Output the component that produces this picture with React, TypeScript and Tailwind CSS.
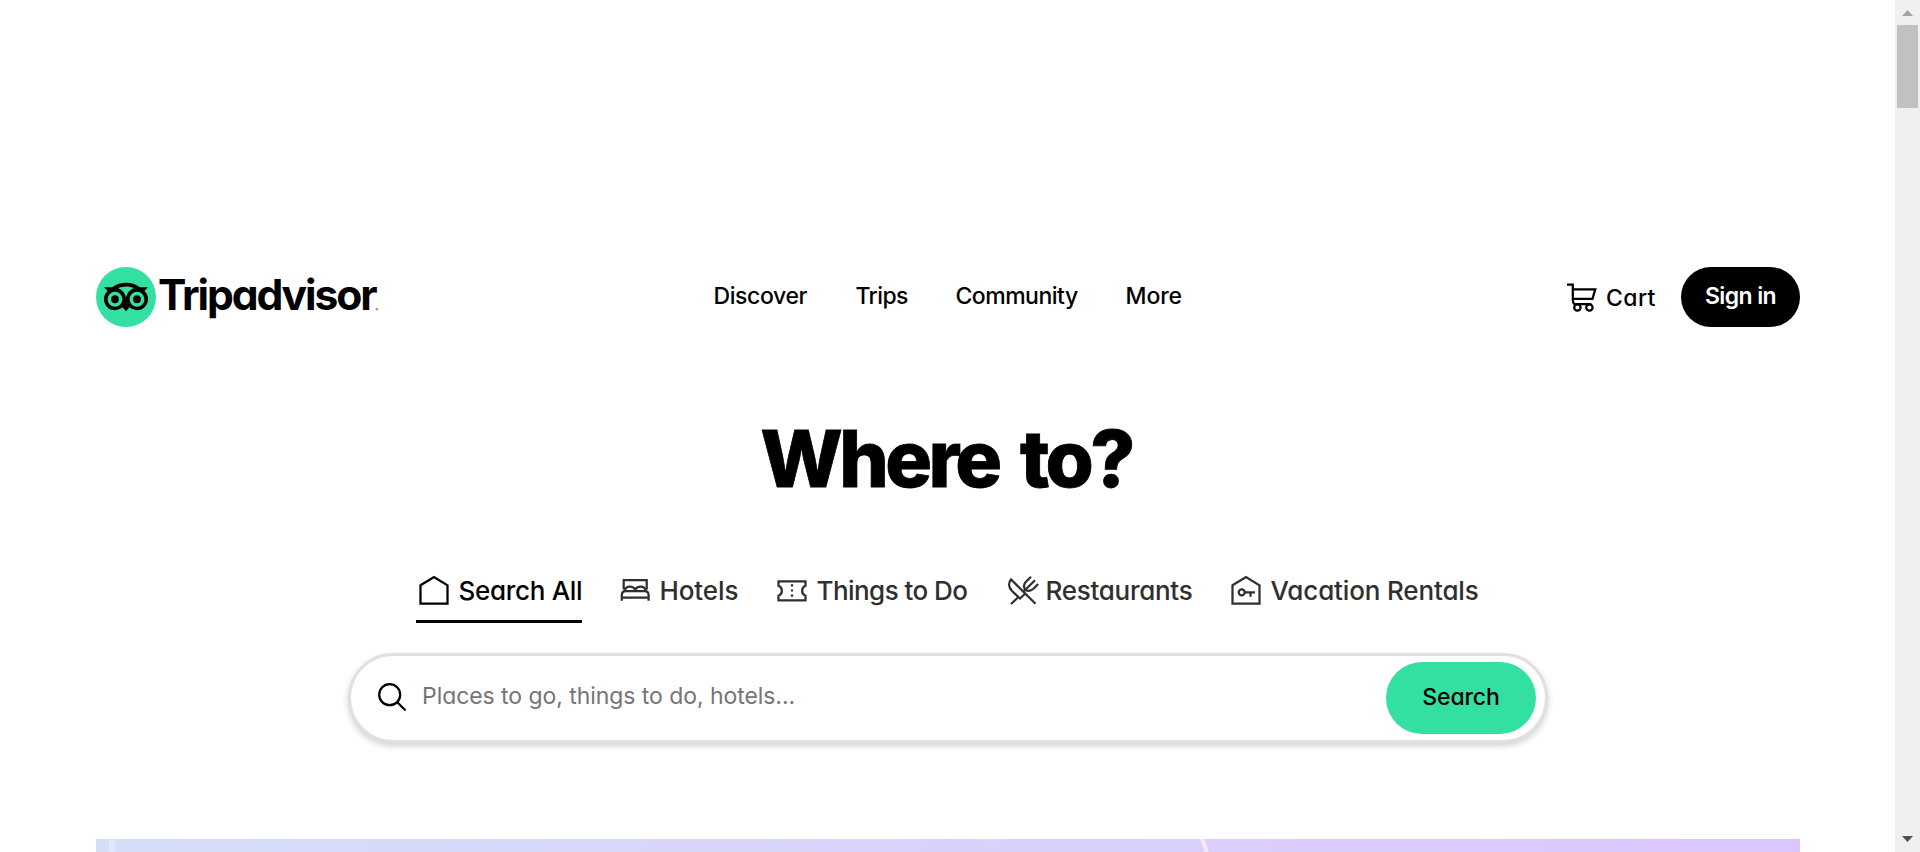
import type { ReactNode } from "react";
import { SiTripadvisor } from "react-icons/si";

function Icon({ children }: { children: ReactNode }) {
  return (
    <svg className="size-9 shrink-0" viewBox="0 0 36 36" fill="none" stroke="currentColor" strokeWidth="2.25">
      {children}
    </svg>
  );
}

const HomeIcon = () => (
  <Icon>
    <path d="M4.5 13.3 18 5l13.5 8.3v18.2h-27z" />
  </Icon>
);

const BedIcon = () => (
  <Icon>
    <path d="M5.700 17.500V8h23v9.500" />
    <path d="M3.800 28.700v-5.700q0-4 4-4h18.800q4 0 4 4v5.700M3.800 25.500h26.800" />
    <path d="M6.500 19q1.200-4.300 5.200-4.300t5.500 3q1.500-3 5.500-3t5.200 4.300" />
  </Icon>
);

const TicketIcon = () => (
  <Icon>
    <path d="M4.500 9.300h27v4.500c-4.500 1.700-4.500 8.200 0 9.900v4.600h-27v-4.600c4.500-1.700 4.500-8.200 0-9.900z" />
    <path d="M18 12.300v2.200M18 17.400v2.200M18 22.500v2.200" />
  </Icon>
);

const DiningIcon = () => (
  <Icon>
    <path d="M31.500 31.700 7 7.500C4 11 4.800 15.500 8 19l8 7.500 4.500-4.300M7 32l8-7.500M19.300 19.800 31 8.300" />
    <path d="m27 4.700-5.300 5.200q-3 3.500-.6 7.800 4.500 2.500 8.100-.7l5-5" />
  </Icon>
);

const KeyHomeIcon = () => (
  <Icon>
    <path d="M4.500 13.300 18 5l13.500 8.300v18.200h-27z" />
    <circle cx="13.700" cy="20.300" r="3" />
    <path d="M16.700 20.300H27M22.500 20.300v4.400" />
  </Icon>
);

const CartIcon = () => (
  <Icon>
    <path d="M3 5.500h5.800v15.200q0 2.700 1.500 4.300h17" />
    <path d="M8.800 10.300h22.500l-2.800 9.500H8.800" />
    <circle cx="13.400" cy="28.500" r="3.200" />
    <circle cx="25.400" cy="28.500" r="3.200" />
  </Icon>
);

const SearchIcon = () => (
  <Icon>
    <circle cx="15.700" cy="14.700" r="10.500" />
    <path d="m23 22 8.600 8.500" />
  </Icon>
);

const nav = [
  { label: "Discover", cls: "w-[95px] pl-px tracking-[-0.4px]" },
  { label: "Trips", cls: "w-[52px] tracking-[-0.6px]" },
  { label: "Community", cls: "w-[122px] tracking-[-0.5px]" },
  { label: "More", cls: "w-[58px] tracking-[-0.1px]" },
];

const tabs = [
  { label: "Search All", icon: <HomeIcon />, cls: "w-[166px] gap-[7px] border-black text-black tracking-[-0.3px]" },
  { label: "Hotels", icon: <BedIcon />, cls: "w-[120px] gap-1.5 border-transparent tracking-[-0.1px]" },
  { label: "Things to Do", icon: <TicketIcon />, cls: "w-[194px] gap-[7px] border-transparent tracking-[-0.55px]" },
  { label: "Restaurants", icon: <DiningIcon />, cls: "w-[188px] gap-1.5 border-transparent tracking-[-0.28px]" },
  { label: "Vacation Rentals", icon: <KeyHomeIcon />, cls: "w-[251px] gap-[7px] border-transparent tracking-[-0.15px]" },
];

function Header() {
  return (
    <header className="grid h-[60px] grid-cols-[1fr_auto_1fr] items-center">
      <div className="flex items-center">
        <div className="flex size-[60px] items-center justify-center rounded-full bg-[#34e0a1]">
          <SiTripadvisor className="size-11" />
        </div>
        <div className="ml-0.5 flex items-end pb-[5px]">
          <span className="text-[42.6px] leading-[52px] font-bold tracking-[-2.1px]">Tripadvisor</span>
          <span className="pb-[9px] text-[4px] leading-none">®</span>
        </div>
      </div>
      <nav className="flex gap-12 pb-px text-[23px] font-medium">
        {nav.map((n) => (
          <a key={n.label} className={n.cls}>{n.label}</a>
        ))}
      </nav>
      <div className="flex items-center justify-end">
        <a className="flex items-center text-[23px] font-medium">
          <CartIcon />
          <span className="ml-1.5 w-[51px] pt-0.5 tracking-[0.4px]">Cart</span>
        </a>
        <button className="ml-6 h-[60px] w-[119px] rounded-full bg-black pb-px text-[23px] font-semibold tracking-[-0.6px] text-white">
          Sign in
        </button>
      </div>
    </header>
  );
}

function SearchBox() {
  return (
    <div className="mx-auto mt-[30px] flex h-[90px] w-[1200px] items-center rounded-full border-[3px] border-[#e0e0e0] bg-white pr-[9px] pl-[23px] shadow-[0_3px_6px_rgba(0,0,0,0.18)]">
      <SearchIcon />
      <span className="ml-3 flex-1 pb-[3px] text-[23px] tracking-[-0.06px] text-[#757575]">
        Places to go, things to do, hotels...
      </span>
      <button className="h-[72px] w-[150px] rounded-full bg-[#34e0a1] pb-px text-[23px] font-medium tracking-[-0.1px]">
        Search
      </button>
    </div>
  );
}

function Banner() {
  return (
    <div className="mt-24 h-[13px] bg-linear-to-r from-[#d4def7] to-[#dcc6ff]">
      <svg className="h-[13px] w-[1704px]" viewBox="0 0 1704 13">
        <path d="M13 0h5.500v13H13z" fill="#e1e8fb" />
        <path d="M1104 0h4.500l4.500 13h-5z" fill="#efe8fe" />
      </svg>
    </div>
  );
}

function Scrollbar() {
  return (
    <div className="flex w-[25px] flex-col items-center bg-[#f0f0f0]">
      <svg className="size-[25px]" viewBox="0 0 25 25">
        <path d="M12.500 10 18 16H7z" fill="#a3a3a3" />
      </svg>
      <div className="h-[83px] w-[21px] bg-[#c1c1c1]" />
      <svg className="mt-auto size-[25px]" viewBox="0 0 25 25">
        <path d="M7 9h11l-5.500 6z" fill="#505050" />
      </svg>
    </div>
  );
}

export default function App() {
  return (
    <div className="flex h-[852px] w-[1920px] overflow-hidden bg-white font-['Inter',sans-serif] text-black [font-feature-settings:'cv11']">
      <main className="w-[1895px] pt-[267px] pr-[95px] pl-24 whitespace-nowrap">
        <Header />
        <h1 className="mt-[93px] pr-1 text-center text-[78px] leading-[78px] font-extrabold tracking-[-3.6px] [word-spacing:8px] [-webkit-text-stroke:0.8px_black]">
          Where to?
        </h1>
        <div className="mt-[74px] flex justify-center gap-9 pr-0.5 text-[26px] font-medium text-[#2f2f2f]">
          {tabs.map((t) => (
            <a key={t.label} className={`flex h-[51px] items-center border-b-[3px] pb-3 ${t.cls}`}>
              {t.icon}
              <span className="pt-px">{t.label}</span>
            </a>
          ))}
        </div>
        <SearchBox />
        <Banner />
      </main>
      <Scrollbar />
    </div>
  );
}
